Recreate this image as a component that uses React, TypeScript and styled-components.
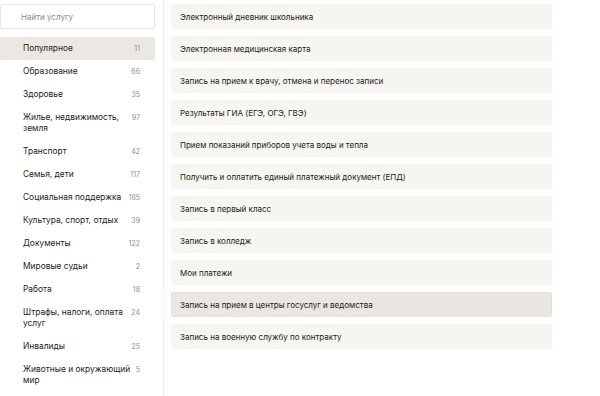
import React from "react";
import styled, { createGlobalStyle } from "styled-components";

const GlobalStyle = createGlobalStyle`
  html, body {
    margin: 0;
    padding: 0;
    background: #fff;
  }
  body {
    font-family: Inter, "Noto Sans", sans-serif;
    color: #222;
  }
`;

const Page = styled.div`
  display: flex;
  width: 600px;
  height: 396px;
  overflow: hidden;
`;

const Sidebar = styled.aside`
  width: 155px;
  flex: none;
  padding-top: 4px;
  margin-right: 8px;
`;

const Search = styled.input`
  box-sizing: border-box;
  display: block;
  width: 155px;
  height: 25px;
  margin: 0 0 8px;
  padding: 0 0 0 20px;
  border: 1px solid #e6e6e6;
  border-radius: 2px;
  outline: none;
  font-family: Inter, sans-serif;
  font-size: 8px;
  color: #222;

  &::placeholder {
    color: #8a8a8a;
  }
`;

const CategoryList = styled.ul`
  list-style: none;
  margin: 0;
  padding: 0;
`;

const Category = styled.li<{ $active?: boolean }>`
  display: flex;
  align-items: flex-start;
  justify-content: space-between;
  gap: 4px;
  padding: 6px 15px 6px 23px;
  border-radius: 2px;
  background: ${(p) => (p.$active ? "#ece7e0" : "transparent")};
  font-size: 8.4px;
  line-height: 11px;
`;

const CategoryName = styled.span`
  color: #222;
`;

const Count = styled.span`
  flex: none;
  font-size: 7px;
  color: #8c8c8c;
`;

const Main = styled.main`
  border-left: 1px solid #f0f0f0;
  padding: 4px 0 0 7px;
  width: 381px;
  flex: none;
  display: flex;
  flex-direction: column;
  gap: 7px;
`;

const ServiceCard = styled.div<{ $active?: boolean }>`
  box-sizing: border-box;
  height: 25px;
  display: flex;
  align-items: center;
  padding: 0 8px;
  border-radius: 2px;
  background: ${(p) => (p.$active ? "#ebe6df" : "#f6f5ef")};
  border: 1px solid ${(p) => (p.$active ? "#e3ded7" : "transparent")};
  font-size: 8px;
  color: #222;
`;

const categories: { name: string; count: number }[] = [
  { name: "Популярное", count: 11 },
  { name: "Образование", count: 66 },
  { name: "Здоровье", count: 35 },
  { name: "Жилье, недвижимость, земля", count: 97 },
  { name: "Транспорт", count: 42 },
  { name: "Семья, дети", count: 117 },
  { name: "Социальная поддержка", count: 185 },
  { name: "Культура, спорт, отдых", count: 39 },
  { name: "Документы", count: 122 },
  { name: "Мировые судьи", count: 2 },
  { name: "Работа", count: 18 },
  { name: "Штрафы, налоги, оплата услуг", count: 24 },
  { name: "Инвалиды", count: 25 },
  { name: "Животные и окружающий мир", count: 5 },
];

const services = [
  "Электронный дневник школьника",
  "Электронная медицинская карта",
  "Запись на прием к врачу, отмена и перенос записи",
  "Результаты ГИА (ЕГЭ, ОГЭ, ГВЭ)",
  "Прием показаний приборов учета воды и тепла",
  "Получить и оплатить единый платежный документ (ЕПД)",
  "Запись в первый класс",
  "Запись в колледж",
  "Мои платежи",
  "Запись на прием в центры госуслуг и ведомства",
  "Запись на военную службу по контракту",
];

export default function App() {
  return (
    <>
      <GlobalStyle />
      <Page>
        <Sidebar>
          <Search placeholder="Найти услугу" />
          <CategoryList>
            {categories.map((c, i) => (
              <Category key={c.name} $active={i === 0}>
                <CategoryName>{c.name}</CategoryName>
                <Count>{c.count}</Count>
              </Category>
            ))}
          </CategoryList>
        </Sidebar>
        <Main>
          {services.map((s, i) => (
            <ServiceCard key={s} $active={i === 9}>
              {s}
            </ServiceCard>
          ))}
        </Main>
      </Page>
    </>
  );
}
